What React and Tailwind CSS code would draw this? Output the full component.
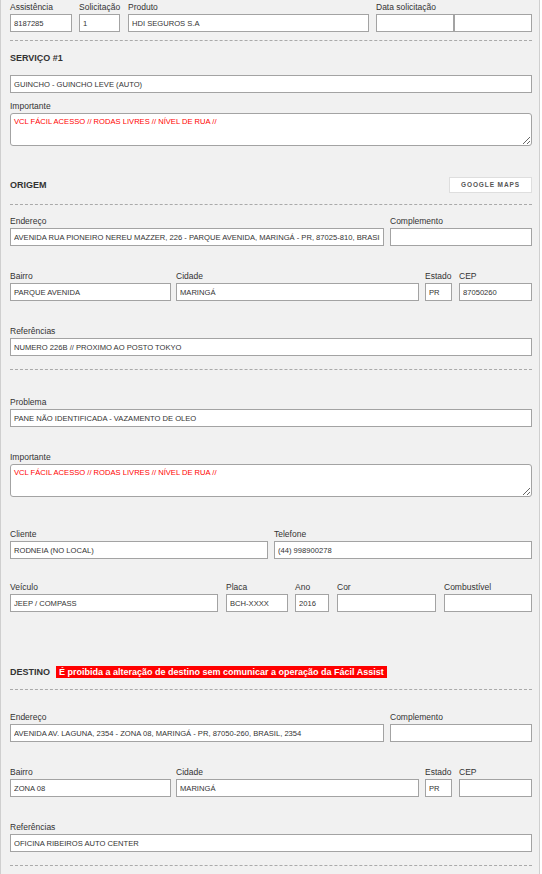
import React from "react";

// Read-only service order form (assistência / origem / destino)
const inputCls =
  "block w-full h-[18px] border border-[#a3a3a3] bg-white px-[3px] text-[7.6px] text-[#333] outline-none rounded-none";

function Label({ children }) {
  return (
    <div className="h-[12px] leading-[12px] mb-[1px] text-[8.5px] text-[#333] whitespace-nowrap">
      {children}
    </div>
  );
}

function Field({ label, value = "", className = "" }) {
  return (
    <div className={className}>
      <Label>{label}</Label>
      <input readOnly value={value} className={inputCls} />
    </div>
  );
}

function Notes({ label, value, className = "" }) {
  return (
    <div className={className}>
      <Label>{label}</Label>
      <textarea
        readOnly
        value={value}
        className="block w-full h-[33px] border border-[#a3a3a3] rounded-[3px] bg-white px-[3px] pt-[3px] text-[7.6px] leading-[10px] text-[#f00] outline-none"
      />
    </div>
  );
}

function Dashed({ className = "" }) {
  return <div className={`border-t border-dashed border-[#aaa] ${className}`} />;
}

function Heading({ children, className = "" }) {
  return (
    <div className={`h-[12px] leading-[12px] text-[9px] font-bold text-[#333] ${className}`}>
      {children}
    </div>
  );
}

const IMPORTANTE = "VCL FÁCIL ACESSO // RODAS LIVRES // NÍVEL DE RUA //";

export default function App() {
  return (
    <div className="min-h-screen bg-white">
      <div className="w-[540px] min-h-[874px] bg-[#f1f1f1] border-x border-[#cfcfcf] pl-[9px] pr-[7px] pt-[1px] font-['Liberation_Sans',Arial,sans-serif]">
        {/* Header row */}
        <div className="flex">
          <Field label="Assistência" value="8187285" className="w-[62px]" />
          <Field label="Solicitação" value="1" className="w-[41px] ml-[7px]" />
          <Field label="Produto" value="HDI SEGUROS S.A" className="w-[241px] ml-[8px]" />
          <div className="w-[156px] ml-[7px]">
            <Label>Data solicitação</Label>
            <div className="flex">
              <input readOnly value="" className={inputCls} />
              <input readOnly value="" className={inputCls} />
            </div>
          </div>
        </div>
        <Dashed className="mt-[8px]" />

        {/* Serviço */}
        <Heading className="mt-[11px]">SERVIÇO #1</Heading>
        <input readOnly value="GUINCHO - GUINCHO LEVE (AUTO)" className={`${inputCls} mt-[11px]`} />
        <Notes label="Importante" value={IMPORTANTE} className="mt-[7px]" />

        {/* Origem */}
        <div className="mt-[31px] h-[16px] flex items-center justify-between">
          <Heading>ORIGEM</Heading>
          <button
            type="button"
            className="w-[83px] h-[16px] bg-white border border-[#dedede] text-[6.5px] font-bold tracking-[0.9px] text-[#555]"
          >
            GOOGLE MAPS
          </button>
        </div>
        <Dashed className="mt-[11px]" />
        <div className="flex mt-[10px]">
          <Field
            label="Endereço"
            value="AVENIDA RUA PIONEIRO NEREU MAZZER, 226 - PARQUE AVENIDA, MARINGÁ - PR, 87025-810, BRASIL"
            className="w-[374px]"
          />
          <Field label="Complemento" className="w-[142px] ml-[6px]" />
        </div>
        <div className="flex mt-[24px]">
          <Field label="Bairro" value="PARQUE AVENIDA" className="w-[161px]" />
          <Field label="Cidade" value="MARINGÁ" className="w-[243px] ml-[5px]" />
          <Field label="Estado" value="PR" className="w-[27px] ml-[6px]" />
          <Field label="CEP" value="87050260" className="w-[73px] ml-[7px]" />
        </div>
        <Field label="Referências" value="NUMERO 226B // PROXIMO AO POSTO TOKYO" className="mt-[24px]" />
        <Dashed className="mt-[13px]" />

        {/* Problema / cliente / veículo */}
        <Field label="Problema" value="PANE NÃO IDENTIFICADA - VAZAMENTO DE OLEO" className="mt-[26px]" />
        <Notes label="Importante" value={IMPORTANTE} className="mt-[24px]" />
        <div className="flex mt-[31px]">
          <Field label="Cliente" value="RODNEIA (NO LOCAL)" className="w-[258px]" />
          <Field label="Telefone" value="(44) 998900278" className="w-[258px] ml-[6px]" />
        </div>
        <div className="flex mt-[22px]">
          <Field label="Veículo" value="JEEP / COMPASS" className="w-[208px]" />
          <Field label="Placa" value="BCH-XXXX" className="w-[62px] ml-[8px]" />
          <Field label="Ano" value="2016" className="w-[34px] ml-[7px]" />
          <Field label="Cor" className="w-[99px] ml-[8px]" />
          <Field label="Combustível" className="w-[88px] ml-[8px]" />
        </div>

        {/* Destino */}
        <div className="mt-[54px] h-[12px] flex items-center">
          <Heading>DESTINO</Heading>
          <span className="ml-[6px] h-[12px] leading-[12px] bg-[#f00] px-[3px] text-[9px] font-bold text-white whitespace-nowrap">
            É proibida a alteração de destino sem comunicar a operação da Fácil Assist
          </span>
        </div>
        <Dashed className="mt-[11px]" />
        <div className="flex mt-[21px]">
          <Field
            label="Endereço"
            value="AVENIDA AV. LAGUNA, 2354 - ZONA 08, MARINGÁ - PR, 87050-260, BRASIL, 2354"
            className="w-[374px]"
          />
          <Field label="Complemento" className="w-[142px] ml-[6px]" />
        </div>
        <div className="flex mt-[24px]">
          <Field label="Bairro" value="ZONA 08" className="w-[161px]" />
          <Field label="Cidade" value="MARINGÁ" className="w-[243px] ml-[5px]" />
          <Field label="Estado" value="PR" className="w-[27px] ml-[6px]" />
          <Field label="CEP" className="w-[73px] ml-[7px]" />
        </div>
        <Field label="Referências" value="OFICINA RIBEIROS AUTO CENTER" className="mt-[24px]" />
        <Dashed className="mt-[13px]" />
      </div>
    </div>
  );
}
